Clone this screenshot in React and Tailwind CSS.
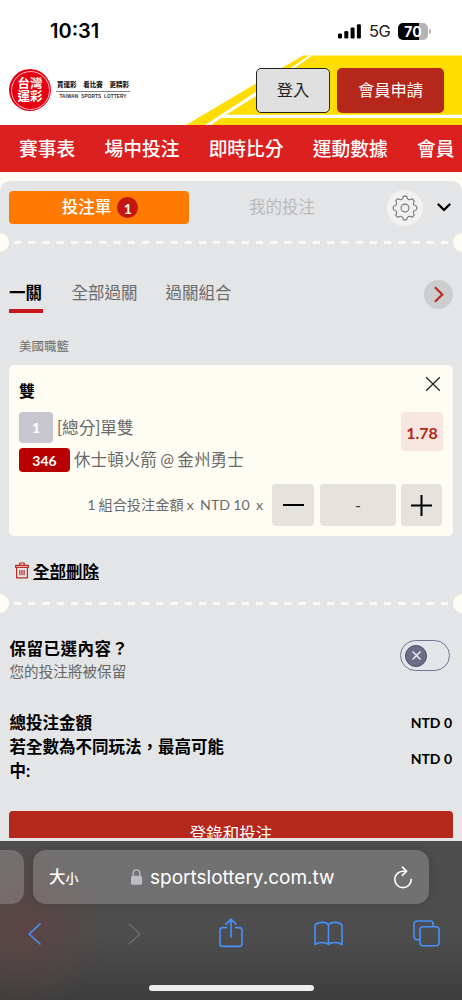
import React, { useState } from "react";

const navItems = ["賽事表", "場中投注", "即時比分", "運動數據", "會員"];

const StatusBar = () => {
  return (
    <div className="h-[55px] shrink-0 flex items-start justify-between pl-[50px] pr-[31px] pt-[18px] font-['Inter','Liberation_Sans',sans-serif]">
      <span className="text-[20px] leading-[26px] font-semibold text-black">10:31</span>
      <div className="flex items-center h-[26px]">
        <svg width="23" height="15" viewBox="0 0 23 15" fill="#000">
          <rect x="0" y="9.5" width="4" height="5" rx="1.2" />
          <rect x="6.3" y="7" width="4" height="7.5" rx="1.2" />
          <rect x="12.6" y="3.5" width="4" height="11" rx="1.2" />
          <rect x="18.9" y="0.3" width="4" height="14.2" rx="1.2" />
        </svg>
        <span className="ml-2 w-[22px] text-[16.5px] leading-[26px] tracking-tight text-[#222]">5G</span>
        <div className="ml-[7px] w-[30px] h-[17px] rounded-[5px] bg-[linear-gradient(to_right,#000_70%,#b4b4b4_70%)] text-white text-[14px] leading-[17px] font-bold text-center">
          70
        </div>
        <div className="ml-px w-[2px] h-[5px] rounded-r-full bg-[#b4b4b4]" />
      </div>
    </div>
  );
};

const Logo = () => {
  return (
    <div className="flex items-center gap-[5px]">
      <div className="size-[42px] rounded-full bg-[#e60012] p-[1.5px]">
        <div className="size-full rounded-full border border-[#f9b9bd] flex flex-col items-center justify-center text-white font-bold text-[12.5px] leading-[13px]">
          <span>台灣</span>
          <span>運彩</span>
        </div>
      </div>
      <div className="w-[74px]">
        <div className="flex justify-between px-px text-[6.5px] leading-[10px] font-black text-[#222]">
          <span>買運彩</span>
          <span>看比賽</span>
          <span>更精彩</span>
        </div>
        <div className="border-t border-[#888] mt-px pt-px text-center whitespace-nowrap text-[4.7px] leading-[8px] tracking-[0.12px] font-bold text-[#333] font-['Liberation_Sans',sans-serif]">
          TAIWAN&nbsp; SPORTS&nbsp; LOTTERY
        </div>
      </div>
    </div>
  );
};

const Header = () => {
  return (
    <header className="relative h-[70px] shrink-0 bg-white">
      <svg className="absolute inset-0" width="462" height="70" viewBox="0 0 462 70">
        <path d="M186 70 303 0.5H462V70Z" fill="#ffdd00" />
        <path d="M205 70 257 36 309 0.5H312L257 40.5 226 59.7H462V63H221L211 70Z" fill="#fff" />
      </svg>
      <div className="relative h-full flex items-center justify-between pl-[9px] pr-[18px]">
        <Logo />
        <div className="flex gap-[7px] text-[16.3px]">
          <button className="w-[74px] h-[45px] rounded-[5px] border border-[#222] bg-[#e0e0e0] text-[#222]">
            登入
          </button>
          <button className="w-[107px] h-[45px] rounded-[5px] bg-[#b5261b] text-white">會員申請</button>
        </div>
      </div>
    </header>
  );
};

const Divider = () => {
  return (
    <div className="h-[19px] flex items-center justify-between overflow-hidden">
      <div className="size-[19px] shrink-0 -ml-[10px] rounded-full bg-[#fffdf3]" />
      <svg width="444" height="3" viewBox="0 0 444 3">
        <line x1="5" x2="439.5" y1="1.5" y2="1.5" stroke="#fffdf3" strokeWidth="2.4" strokeDasharray="7.2 7.03" />
      </svg>
      <div className="size-[19px] shrink-0 -mr-[10px] rounded-full bg-[#fffdf3]" />
    </div>
  );
};

const BetCard = () => {
  return (
    <div className="mx-[9px] h-[171px] shrink-0 rounded-[5px] bg-[#fffdf3] pl-[10px] pr-[10px] pt-[11px]">
      <div className="flex justify-between h-[36px]">
        <span className="text-[16px] leading-[30px] font-bold text-black">雙</span>
        <svg width="16" height="16" viewBox="0 0 16 16" stroke="#222" strokeWidth="1.3" className="mr-[2px]">
          <path d="M1.2 1.2 14.8 14.8M14.8 1.2 1.2 14.8" />
        </svg>
      </div>
      <div className="flex justify-between">
        <div className="text-[16.6px] text-[#6b6b6b] [word-spacing:-1px]">
          <div className="flex items-center h-[31px]">
            <span className="w-[34px] h-[31px] rounded-[4px] bg-[#c8c6cf] text-white text-[14px] leading-[32px] text-center font-bold">1</span>
            <span className="ml-[4px] mt-[2px]">[總分]單雙</span>
          </div>
          <div className="flex items-center h-[24px] mt-[5px]">
            <span className="w-[51px] h-[24px] rounded-[4px] bg-[#b70000] text-white text-[14px] leading-[25px] text-center font-bold">346</span>
            <span className="ml-[4px]">休士頓火箭 @ 金州勇士</span>
          </div>
        </div>
        <div className="w-[42px] h-[39px] rounded-[4px] bg-[#f8e7e1] text-[#b5261b] text-[16px] leading-[41px] font-bold text-center">1.78</div>
      </div>
      <div className="flex items-center justify-end mt-[12px] mr-px text-[14.2px] text-[#6b6b6b]">
        <span className="mr-[9px] [word-spacing:-0.5px]">1 組合投注金額 x&nbsp; NTD 10&nbsp; x</span>
        <button className="w-[42px] h-[42px] rounded-[4px] bg-[#e5e3dd] flex items-center justify-center">
          <span className="w-[21px] h-[2px] bg-black" />
        </button>
        <div className="ml-[6px] mr-[5px] w-[76px] h-[42px] rounded-[4px] bg-[#e5e3dd] text-center leading-[42px] text-[#333] text-[16px]">-</div>
        <button className="w-[41px] h-[42px] rounded-[4px] bg-[#e5e3dd] flex items-center justify-center">
          <svg width="21" height="21" viewBox="0 0 21 21" stroke="#000" strokeWidth="2">
            <path d="M0 10.5H21M10.5 0V21" />
          </svg>
        </button>
      </div>
    </div>
  );
};

const BrowserBar = () => {
  return (
    <footer className="h-[159px] shrink-0 overflow-hidden bg-[radial-gradient(circle_at_22px_85px,#5c4444_0,#5c444400_85px),linear-gradient(#4e4e4e,#4d4d4d_60%,#3d3d3d)] font-['Inter','Liberation_Sans','Noto_Sans_CJK_TC',sans-serif]">
      <div className="flex pt-[9px]">
        <div className="w-[24px] h-[54px] rounded-r-[13px] bg-white/20" />
        <div className="ml-[9px] w-[396px] h-[54px] rounded-[13px] bg-white/20 shadow-[0_0_12px_rgba(0,0,0,0.12)] flex items-center text-white">
          <span className="ml-4 w-[82px] pt-px text-[16.5px] font-medium">大<span className="text-[13px]">小</span></span>
          <svg width="11" height="16" viewBox="0 0 11 16">
            <path d="M2.2 8V4.2a3.3 3.3 0 0 1 6.6 0V8" fill="none" stroke="#bdbcc2" strokeWidth="1.4" />
            <rect y="6.8" width="11" height="9" rx="1.6" fill="#bdbcc2" />
          </svg>
          <span className="ml-2 w-[243px] pt-[3px] text-[19px]">sportslottery.com.tw</span>
          <svg width="20" height="23" viewBox="0 0 20 23" fill="none" stroke="#fff" strokeWidth="1.6" strokeLinecap="round" strokeLinejoin="round">
            <path d="M13.4 5.2H10a8.2 8.2 0 1 0 8.2 8.2" />
            <path d="M9.4 1.2 13.6 5.2 9.4 9.4" />
          </svg>
        </div>
      </div>
      <div className="flex items-start h-[46px] mt-[9px] pl-[28px]">
        <svg width="13" height="22" viewBox="0 0 13 22" fill="none" stroke="#4691fb" strokeWidth="1.7" strokeLinecap="round" className="mt-[10px]">
          <path d="M12 1 1.2 11 12 21" />
        </svg>
        <svg width="13" height="22" viewBox="0 0 13 22" fill="none" stroke="#6b6b6b" strokeWidth="1.5" strokeLinecap="round" className="ml-[87px] mt-[10px]">
          <path d="M1 1 11.8 11 1 21" />
        </svg>
        <svg width="24" height="30" viewBox="0 0 24 30" fill="none" stroke="#4691fb" strokeWidth="1.6" strokeLinecap="round" strokeLinejoin="round" className="ml-[78px] mt-[5px]">
          <path d="M7.5 9.6H3.6a2.6 2.6 0 0 0-2.6 2.6v13.6a2.6 2.6 0 0 0 2.6 2.6h16.8a2.6 2.6 0 0 0 2.6-2.6V12.2a2.6 2.6 0 0 0-2.6-2.6h-3.9" />
          <path d="M12 19V1.4M7 6.1l5-5 5 5" />
        </svg>
        <svg width="29" height="25" viewBox="0 0 29 25" fill="none" stroke="#4691fb" strokeWidth="1.6" strokeLinejoin="round" className="ml-[71px] mt-[8px]">
          <path d="M14.5 4C12.5 .5 4 .5 1 4V23.5C4.5 20.8 12 20.8 14.5 23.5 17 20.8 24.5 20.8 28 23.5V4C25 .5 16.5 .5 14.5 4V23.5" />
        </svg>
        <svg width="27" height="27" viewBox="0 0 27 27" fill="none" stroke="#4691fb" strokeWidth="1.6" className="ml-[70px] mt-[7px]">
          <path d="M7 19.8H4.2A3.2 3.2 0 0 1 1 16.6V4.2A3.2 3.2 0 0 1 4.2 1H17a3.2 3.2 0 0 1 3.2 3.2V6.5" />
          <rect x="7" y="6.7" width="19" height="19" rx="3" />
        </svg>
      </div>
      <div className="mx-auto mt-[26px] w-[165px] h-[6px] rounded-full bg-[#eee]" />
    </footer>
  );
};

export default function App() {
  const [keep, setKeep] = useState(false);

  return (
    <div className="w-[462px] h-[1000px] overflow-hidden flex flex-col bg-white font-['Lato','Noto_Sans_CJK_TC',sans-serif]">
      <StatusBar />
      <Header />
      <nav className="h-[47px] shrink-0 flex items-center gap-[29.2px] pl-[19px] overflow-hidden bg-[#dc1f1f] text-white text-[18.75px] leading-[47px] font-medium whitespace-nowrap">
        {navItems.map((item) => (
          <span key={item}>{item}</span>
        ))}
      </nav>
      <div className="h-[669px] shrink-0 overflow-hidden bg-[#fffdf3] pt-[9px]">
        <main className="h-[660px] overflow-hidden rounded-t-[10px] bg-[#e4e5e7] flex flex-col">
          <div className="flex items-center h-[33px] mt-[10px] pl-[9px] shrink-0 text-[16.5px]">
            <button className="w-[180px] h-[33px] rounded-[4px] bg-[#ff7a00] flex items-center justify-center gap-[6px] pl-[2px] text-white font-medium">
              投注單
              <span className="size-[21px] rounded-full bg-[#c4160f] text-[14px] leading-[23px] font-bold">1</span>
            </button>
            <span className="w-[198px] pr-[12px] text-center text-[#b9babc]">我的投注</span>
            <div className="size-[36px] shrink-0 rounded-full bg-[#f1f1f1] flex items-center justify-center">
              <svg width="26" height="26" viewBox="0 0 26 26" fill="none" stroke="#777" strokeWidth="1.1" strokeLinejoin="round">
                <circle cx="13" cy="13" r="3.9" />
                <path d="M11.3 1.4Q13 .9 14.7 1.4C15.2 5 17 5.6 20 3.7Q21.6 4.6 22.3 6C20.4 9 21.3 10.8 24.6 11.3Q25.1 13 24.6 14.7C21.3 15.2 20.4 17 22.3 20Q21.4 21.6 20 22.3C17 20.4 15.2 21.3 14.7 24.6Q13 25.1 11.3 24.6C10.8 21.3 9 20.4 6 22.3Q4.4 21.4 3.7 20C5.6 17 4.7 15.2 1.4 14.7Q.9 13 1.4 11.3C4.7 10.8 5.6 9 3.7 6Q4.6 4.4 6 3.7C9 5.6 10.8 5 11.3 1.4Z" />
              </svg>
            </div>
            <svg width="14" height="9" viewBox="0 0 14 9" fill="none" stroke="#000" strokeWidth="2.3" strokeLinecap="round" strokeLinejoin="round" className="ml-[14px]">
              <path d="M1.5 1.5 7 7 12.5 1.5" />
            </svg>
          </div>
          <div className="mt-[9px] shrink-0">
            <Divider />
          </div>
          <div className="flex items-start mt-[28px] h-[57px] shrink-0 pl-[9px] pr-[9px] text-[16.5px] leading-[26px] text-[#6b6b6b]">
            <div className="w-[34px] text-black font-bold">
              一關
              <div className="mt-[3px] h-[4px] bg-[#c4161c]" />
            </div>
            <span className="ml-[28.5px]">全部過關</span>
            <span className="ml-[28px]">過關組合</span>
            <div className="ml-auto size-[29px] rounded-full bg-[#cccdcf] flex items-center justify-center">
              <svg width="10" height="17" viewBox="0 0 10 17" fill="none" stroke="#b92b22" strokeWidth="2.2">
                <path d="M1 1.2 8.3 8.5 1 15.8" />
              </svg>
            </div>
          </div>
          <div className="ml-[19px] pt-px h-[28px] shrink-0 text-[12.5px] leading-[18px] text-[#6b6b6b]">美國職籃</div>
          <BetCard />
          <div className="flex items-center mt-[23px] ml-[15px] h-[26px] shrink-0 gap-[4px]">
            <svg width="14" height="17" viewBox="0 0 14 17" fill="none" stroke="#b92b22" strokeWidth="1.2" strokeLinejoin="round" className="-mt-[3px]">
              <path d="M.6 3.3H13.4V5.3H.6ZM4.8 3.1V1H9.2V3.1M1.6 5.5V15.9H12.4V5.5M4.9 8V13.2M7 8V13.2M9.1 8V13.2" />
            </svg>
            <span className="text-[16.5px] leading-[24px] font-bold text-black underline underline-offset-1">全部刪除</span>
          </div>
          <div className="mt-[9px] shrink-0">
            <Divider />
          </div>
          <div className="flex justify-between mt-[23px] pl-[9.5px] pr-[12px] h-[75px] shrink-0">
            <div>
              <div className="text-[16.5px] leading-[26px] font-bold tracking-[0.5px] text-black">保留已選內容？</div>
              <div className="text-[14.6px] leading-[19px] text-[#666]">您的投注將被保留</div>
            </div>
            <button
              className="mt-[4px] w-[50px] h-[31px] rounded-full border border-[#77749a] flex items-center pl-[4px]"
              onClick={() => setKeep(!keep)}
            >
              <span className="size-[22px] rounded-full border border-[#4c4972] bg-[#6f6d88] flex items-center justify-center">
                <svg width="9" height="9" viewBox="0 0 9 9" stroke="#fff" strokeWidth="1.1">
                  <path d="M.5 .5 8.5 8.5M8.5 .5 .5 8.5" />
                </svg>
              </span>
            </button>
          </div>
          <div className="flex justify-between pl-[9.5px] pr-[10px] h-[100px] shrink-0 text-black text-[16.5px] leading-[24px] font-bold">
            <div>
              <div>總投注金額</div>
              <div className="w-[220px]">若全數為不同玩法，最高可能中:</div>
            </div>
            <div className="text-[14px] text-right">
              <div>NTD 0</div>
              <div className="mt-[12px]">NTD 0</div>
            </div>
          </div>
          <div className="mx-[9px] h-[27px] shrink-0 overflow-hidden rounded-t-[4px] bg-[#b5261b] text-center text-white text-[16.5px] leading-[47px]">
            登錄和投注
          </div>
        </main>
      </div>
      <BrowserBar />
    </div>
  );
}
